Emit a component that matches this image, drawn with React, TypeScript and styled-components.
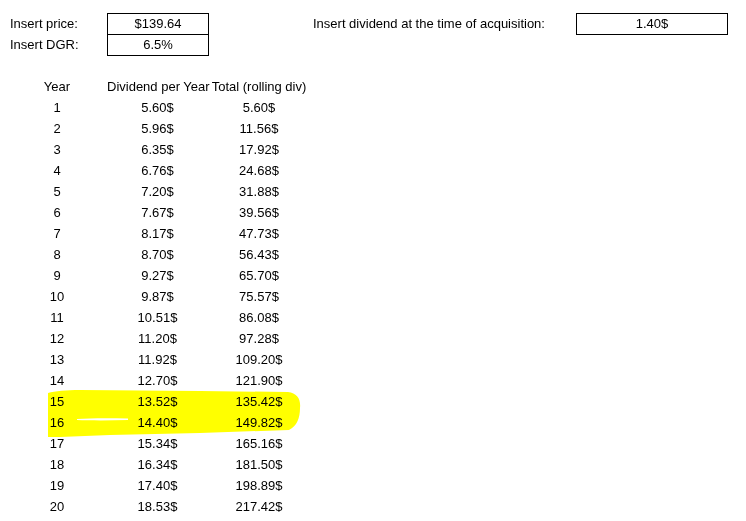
import React from "react";
import styled, { createGlobalStyle } from "styled-components";

const rows: [number, string, string][] = [
  [1, "5.60$", "5.60$"],
  [2, "5.96$", "11.56$"],
  [3, "6.35$", "17.92$"],
  [4, "6.76$", "24.68$"],
  [5, "7.20$", "31.88$"],
  [6, "7.67$", "39.56$"],
  [7, "8.17$", "47.73$"],
  [8, "8.70$", "56.43$"],
  [9, "9.27$", "65.70$"],
  [10, "9.87$", "75.57$"],
  [11, "10.51$", "86.08$"],
  [12, "11.20$", "97.28$"],
  [13, "11.92$", "109.20$"],
  [14, "12.70$", "121.90$"],
  [15, "13.52$", "135.42$"],
  [16, "14.40$", "149.82$"],
  [17, "15.34$", "165.16$"],
  [18, "16.34$", "181.50$"],
  [19, "17.40$", "198.89$"],
  [20, "18.53$", "217.42$"],
];

const App = () => {
  return (
    <>
      <GlobalStyle />
      <Sheet>
        <Inputs>
          <Label row={1} col={1}>Insert price:</Label>
          <Label row={2} col={1}>Insert DGR:</Label>
          <PriceBox>
            <BoxCell>$139.64</BoxCell>
            <BoxCell>6.5%</BoxCell>
          </PriceBox>
          <Label row={1} col={4}>Insert dividend at the time of acquisition:</Label>
          <DividendBox>1.40$</DividendBox>
        </Inputs>

        <TableWrapper>
          <Table>
            <Cell>Year</Cell>
            <Cell>Dividend per Year</Cell>
            <Cell>Total (rolling div)</Cell>
            {rows.map(([year, dividend, total]) => (
              <React.Fragment key={year}>
                <Cell>{year}</Cell>
                <Cell>{dividend}</Cell>
                <Cell>{total}</Cell>
              </React.Fragment>
            ))}
          </Table>
          <Highlight viewBox="47 388 257 51" width="257" height="51">
            <path
              d="M48,393 C55,391 66,390 80,390 L200,391 L288,392 C297,393 301,399 300,408 C300,418 297,426 289,430 L200,433 L110,435 L60,437 L48,437 Z"
              fill="#ffff00"
            />
            <path
              d="M77,419 C90,418 110,418 128,418.5 L128,420 C110,420.5 90,420.5 77,420 Z"
              fill="#ffffff"
            />
          </Highlight>
        </TableWrapper>
      </Sheet>
    </>
  );
};

const GlobalStyle = createGlobalStyle`
  body {
    margin: 0;
    background: #ffffff;
    font-family: "Liberation Sans", Arial, sans-serif;
    font-size: 13px;
    color: #000000;
  }
`;

const Sheet = styled.div`
  width: 746px;
  height: 521px;
  padding: 13px 0 0 7px;
  box-sizing: border-box;
  overflow: hidden;
`;

const Inputs = styled.div`
  display: grid;
  grid-template-columns: 100px 102px 101px 266px 152px;
  grid-template-rows: 21px 21px;
`;

const Label = styled.div<{ row: number; col: number }>`
  grid-row: ${(p) => p.row};
  grid-column: ${(p) => p.col};
  padding-left: 3px;
  line-height: 21px;
  white-space: nowrap;
`;

const PriceBox = styled.div`
  grid-column: 2;
  grid-row: 1 / span 2;
  align-self: start;
  display: flex;
  flex-direction: column;
  height: 43px;
  border: 1px solid #000000;
  box-sizing: border-box;
`;

const BoxCell = styled.div`
  height: 20px;
  line-height: 20px;
  text-align: center;

  & + & {
    border-top: 1px solid #000000;
  }
`;

const DividendBox = styled.div`
  grid-column: 5;
  grid-row: 1;
  align-self: start;
  height: 22px;
  line-height: 20px;
  border: 1px solid #000000;
  box-sizing: border-box;
  text-align: center;
`;

const TableWrapper = styled.div`
  position: relative;
  margin-top: 21px;
`;

const Table = styled.div`
  display: grid;
  grid-template-columns: 100px 101px 102px;
  grid-auto-rows: 21px;
`;

const Cell = styled.div`
  line-height: 21px;
  text-align: center;
  white-space: nowrap;
`;

const Highlight = styled.svg`
  position: absolute;
  left: 40px;
  top: 312px;
  mix-blend-mode: multiply;
  pointer-events: none;
`;

export default App;
